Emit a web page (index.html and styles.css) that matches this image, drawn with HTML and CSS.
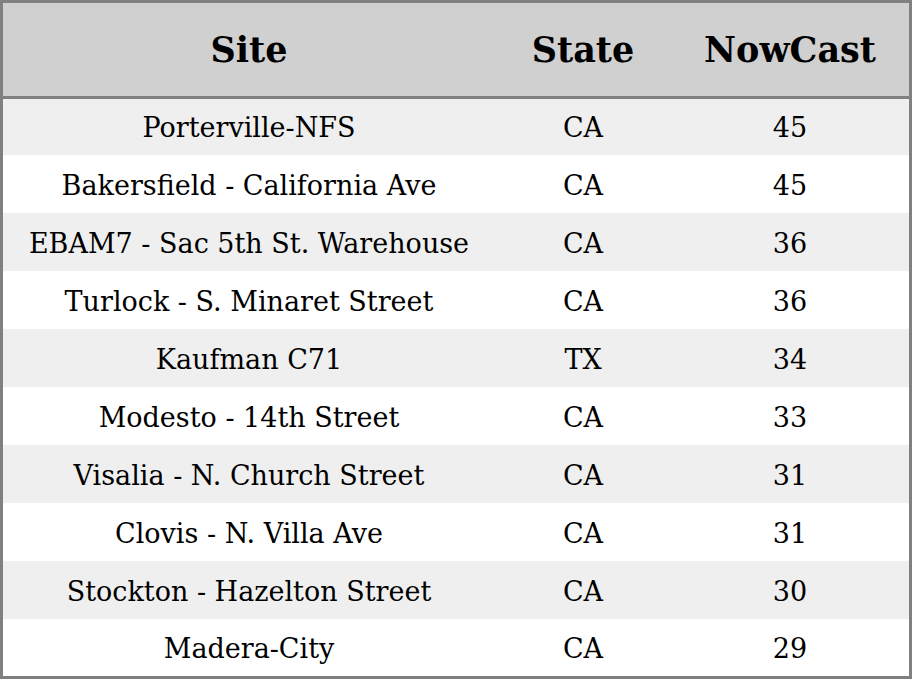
FILE: index.html
```html
<!DOCTYPE html>
<html>
<head>
<meta charset="utf-8">
<link rel="stylesheet" href="styles.css">
</head>
<body>
<table class="aq">
  <colgroup>
    <col class="c-site">
    <col class="c-state">
    <col class="c-now">
  </colgroup>
  <thead>
    <tr><th>Site</th><th>State</th><th>NowCast</th></tr>
  </thead>
  <tbody>
    <tr><td>Porterville-NFS</td><td>CA</td><td>45</td></tr>
    <tr><td>Bakersfield - California Ave</td><td>CA</td><td>45</td></tr>
    <tr><td>EBAM7 - Sac 5th St. Warehouse</td><td>CA</td><td>36</td></tr>
    <tr><td>Turlock - S. Minaret Street</td><td>CA</td><td>36</td></tr>
    <tr><td>Kaufman C71</td><td>TX</td><td>34</td></tr>
    <tr><td>Modesto - 14th Street</td><td>CA</td><td>33</td></tr>
    <tr><td>Visalia - N. Church Street</td><td>CA</td><td>31</td></tr>
    <tr><td>Clovis - N. Villa Ave</td><td>CA</td><td>31</td></tr>
    <tr><td>Stockton - Hazelton Street</td><td>CA</td><td>30</td></tr>
    <tr><td>Madera-City</td><td>CA</td><td>29</td></tr>
  </tbody>
</table>
</body>
</html>
```
FILE: styles.css
```css
html, body {
  margin: 0;
  padding: 0;
  background: #fff;
}
.aq {
  width: 912px;
  height: 679px;
  border-collapse: separate;
  border-spacing: 0;
  border: 3px solid #808080;
  box-sizing: border-box;
  font-family: "DejaVu Serif", serif;
  color: #000;
  table-layout: fixed;
}
.c-site { width: 492px; }
.c-state { width: 176px; }
.c-now { width: 238px; }
.aq th {
  background: #d0d0d0;
  font-size: 35px;
  font-weight: bold;
  height: 93px;
  padding: 0;
  text-align: center;
  border-bottom: 3px solid #808080;
}
.aq td {
  font-size: 27px;
  text-align: center;
  padding: 2px 0 0;
  height: 56px;
  box-sizing: border-box;
}
.aq tbody tr:first-child td {
  height: 56px;
  padding-top: 1px;
}
.aq tbody tr:nth-child(n+2) td {
  height: 58px;
}
.aq tbody tr:last-child td {
  height: 57px;
}
.aq tbody tr:nth-child(odd) td {
  background: #efefef;
}
```
